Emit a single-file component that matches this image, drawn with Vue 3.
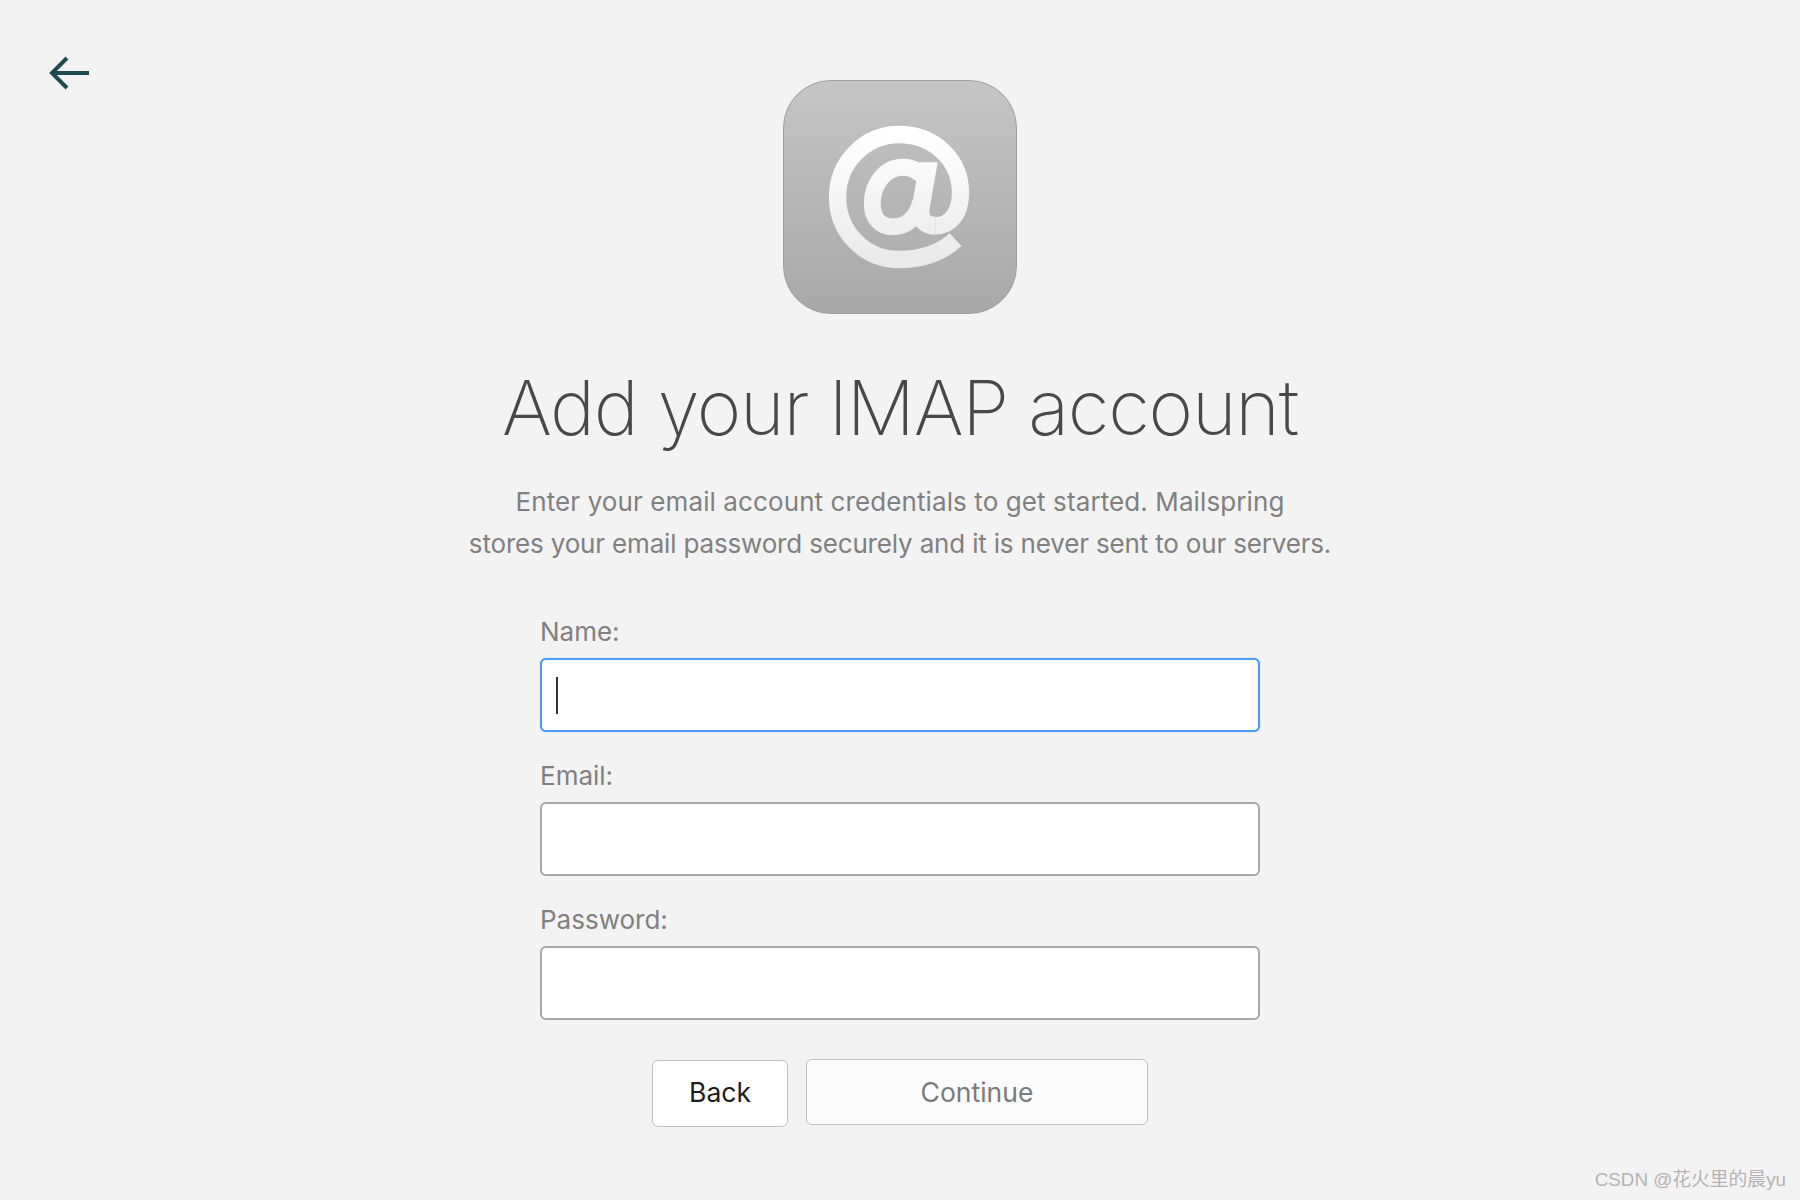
<script setup>
const fields = [
  { label: 'Name:', focused: true },
  { label: 'Email:', focused: false },
  { label: 'Password:', focused: false },
]
</script>

<template>
  <div class="page">
    <svg class="back-arrow" width="44" height="36" viewBox="0 0 44 36" fill="none">
      <path d="M5 18H42M20 3L5 18L20 33" stroke="#1f4a4f" stroke-width="4" />
    </svg>

    <div class="app-icon">
      <svg width="234" height="234" viewBox="0 0 234 234" fill="none">
        <defs>
          <linearGradient id="at" x1="0" y1="54" x2="0" y2="180" gradientUnits="userSpaceOnUse">
            <stop offset="0" stop-color="#ffffff" />
            <stop offset="1" stop-color="#eaeaea" />
          </linearGradient>
          <clipPath id="stem-top">
            <rect x="0" y="82" width="234" height="152" />
          </clipPath>
        </defs>
        <path
          d="M173 160C158 174 138 180 116 180C81 180 54 152 54 117C54 82 82 54 116 54C152 54 178 80 178 113C178 133 168 146 153 146"
          stroke="url(#at)"
          stroke-width="17.5"
        />
        <path
          d="M153 146C142 146 136 139 138 127L148 70"
          stroke="url(#at)"
          stroke-width="18"
          clip-path="url(#stem-top)"
        />
        <path
          d="M144 100C138 92 130 87 120 87C102 87 89 104 89 124C89 138 97 147 110 147C125 147 134 136 138 122"
          stroke="url(#at)"
          stroke-width="17"
        />
      </svg>
    </div>

    <h1>Add your IMAP account</h1>
    <p class="intro">
      <span class="first-line">Enter your email account credentials to get started. Mailspring</span><br />
      stores your email password securely and it is never sent to our servers.
    </p>

    <form class="form">
      <div v-for="field in fields" :key="field.label" class="field">
        <label>{{ field.label }}</label>
        <div class="input" :class="{ focused: field.focused }">
          <span v-if="field.focused" class="caret"></span>
        </div>
      </div>
    </form>

    <div class="buttons">
      <button type="button" class="btn back">Back</button>
      <button type="button" class="btn continue">Continue</button>
    </div>

    <div class="watermark">CSDN @花火里的晨yu</div>
  </div>
</template>

<style>
html,
body {
  margin: 0;
  background: #f3f3f3;
}
</style>

<style scoped>
.page {
  position: relative;
  width: 1800px;
  height: 1200px;
  box-sizing: border-box;
  padding-top: 80px;
  overflow: hidden;
  display: flex;
  flex-direction: column;
  align-items: center;
  background: #f3f3f3;
  font-family: Inter, "Liberation Sans", sans-serif;
}

.back-arrow {
  position: absolute;
  left: 47px;
  top: 55px;
}

.app-icon {
  width: 234px;
  height: 234px;
  box-sizing: border-box;
  border: 1px solid #9e9e9e;
  border-radius: 48px;
  background: linear-gradient(#c5c5c5, #a8a8a8);
  display: flex;
  align-items: center;
  justify-content: center;
}

h1 {
  margin: 43px 0 0;
  font-size: 76px;
  line-height: 100px;
  font-weight: 150;
  letter-spacing: -1.2px;
  color: #484848;
}

.intro {
  margin: 24px 0 0;
  text-align: center;
  font-size: 26px;
  line-height: 42px;
  letter-spacing: -0.17px;
  color: #808080;
}

.first-line {
  letter-spacing: 0.1px;
}

.form {
  width: 720px;
  margin-top: 52px;
  display: flex;
  flex-direction: column;
  gap: 29px;
}

.field {
  display: flex;
  flex-direction: column;
}

label {
  font-size: 26px;
  line-height: 30px;
  margin-bottom: 11px;
  color: #808080;
}

.input {
  position: relative;
  height: 74px;
  box-sizing: border-box;
  border: 2px solid #a8a8a8;
  border-radius: 6px;
  background: #fff;
}

.input.focused {
  border-color: #4a9cf6;
  box-shadow: 0 0 1px #4a9cf6;
}

.caret {
  position: absolute;
  left: 14px;
  top: 17px;
  width: 2px;
  height: 37px;
  background: #333;
}

.buttons {
  margin-top: 39px;
  display: flex;
  align-items: flex-start;
  gap: 18px;
}

.btn {
  box-sizing: border-box;
  border: 1px solid #c0c0c0;
  border-radius: 6px;
  font-family: inherit;
  font-size: 26.5px;
  padding: 0;
}

.back {
  width: 136px;
  height: 67px;
  margin-top: 1px;
  padding-bottom: 3px;
  background: #fff;
  color: #1c1c1c;
}

.continue {
  width: 342px;
  height: 66px;
  background: #fbfbfb;
  color: #7a7a7a;
}

.watermark {
  position: absolute;
  right: 14px;
  bottom: 9px;
  font-family: "Liberation Sans", "Noto Sans CJK SC", sans-serif;
  font-size: 18.8px;
  color: #b4b4b4;
}
</style>
